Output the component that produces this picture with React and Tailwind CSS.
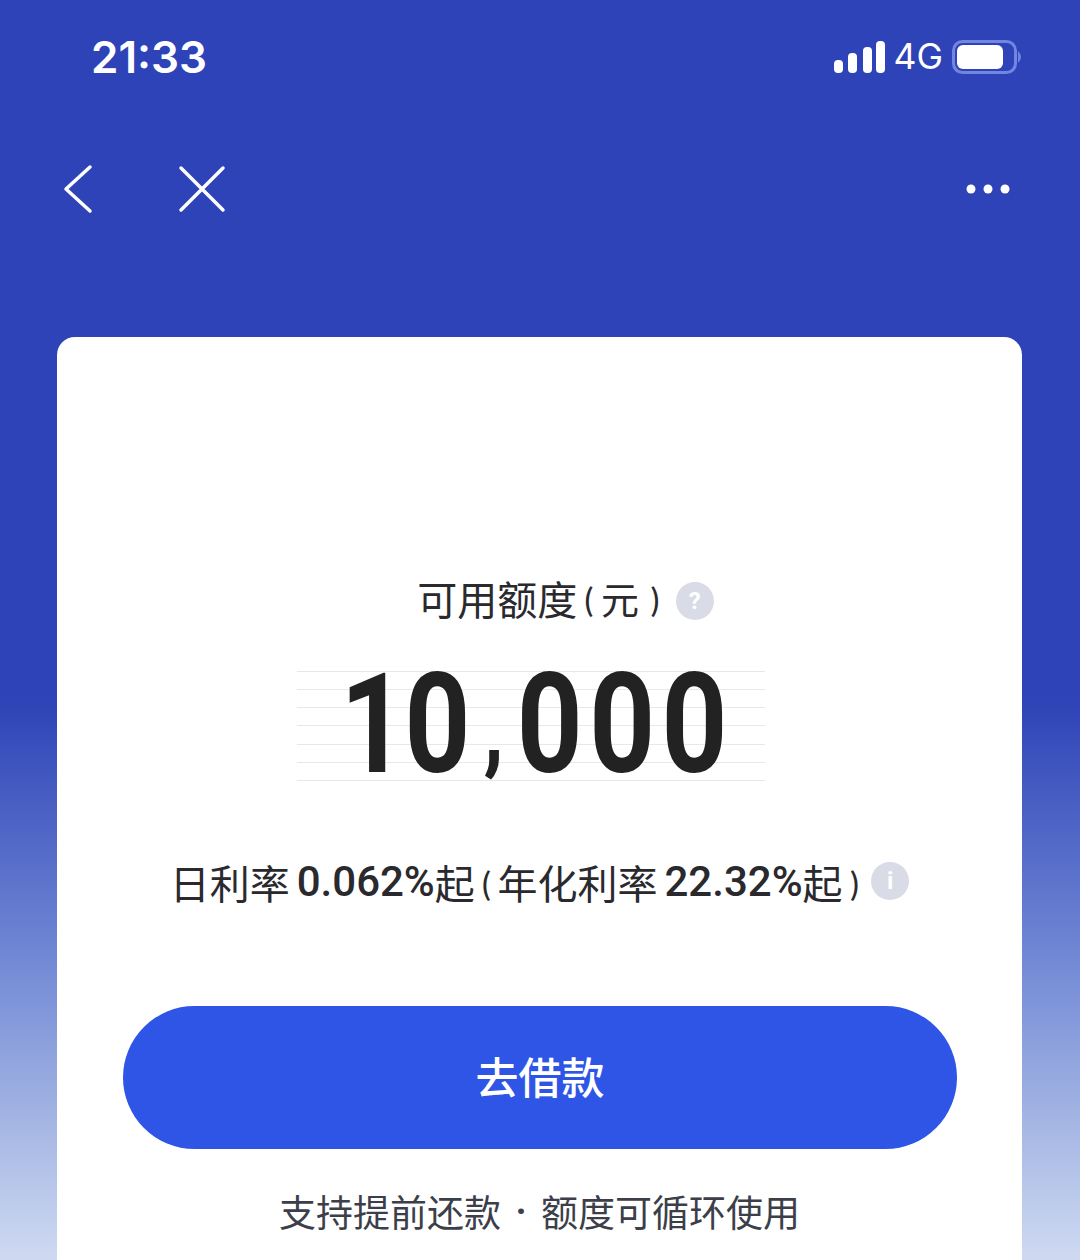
export default function App() {
  const cjk = { fontFamily: '"Noto Sans CJK SC", sans-serif' };
  return (
    <div className="relative h-[1260px] w-[1080px] overflow-hidden bg-[linear-gradient(180deg,#2d43b7_0px,#2d43b7_700px,#6f86d4_950px,#9fb1e2_1105px,#cfdaf1_1260px)] font-['Roboto',sans-serif]">
      <div className="flex h-[114px] items-center justify-between pl-[91px] pr-[57px]">
        <span className="text-[44px] font-semibold leading-none tracking-[0px] text-white font-['Inter',sans-serif]">21:33</span>
        <div className="flex items-center">
          <svg width="52" height="32" viewBox="0 0 52 32" fill="#fff" className="mr-[8px]">
            <rect x="0" y="19" width="9" height="13" rx="4" />
            <rect x="14" y="12" width="9" height="20" rx="4" />
            <rect x="29" y="6" width="9" height="26" rx="4" />
            <rect x="42" y="0" width="9" height="32" rx="4" />
          </svg>
          <span className="mr-[9px] text-[35.5px] leading-none text-white font-['Inter',sans-serif]">4G</span>
          <svg width="71" height="34" viewBox="0 0 71 34">
            <rect x="1.5" y="1.5" width="62" height="31" rx="9" fill="none" stroke="#7286e0" strokeWidth="3" />
            <rect x="5" y="5" width="46" height="24" rx="6" fill="#fff" />
            <path d="M66 11 Q72 17 66 23Z" fill="#7286e0" />
          </svg>
        </div>
      </div>
      <div className="flex h-[150px] items-center justify-between pl-[62px] pr-[68px]">
        <div className="flex items-center gap-[84px]">
          <svg width="32" height="50" viewBox="0 0 32 50" fill="none" stroke="#fff" strokeWidth="3.5" strokeLinecap="round" strokeLinejoin="round">
            <path d="M28 3 L4 25 L28 47" />
          </svg>
          <svg width="48" height="48" viewBox="0 0 48 48" fill="none" stroke="#fff" strokeWidth="3.5" strokeLinecap="round">
            <path d="M3 3 L45 45 M45 3 L3 45" />
          </svg>
        </div>
        <svg width="46" height="10" viewBox="0 0 46 10" fill="#fff">
          <circle cx="5" cy="5" r="4.5" /><circle cx="22" cy="5" r="4.5" /><circle cx="39" cy="5" r="4.5" />
        </svg>
      </div>
      <div className="ml-[57px] mt-[73px] h-[1000px] w-[965px] rounded-t-[18px] bg-white pt-[236px]" style={cjk}>
        <div className="flex h-[56px] items-center justify-center pl-[52px]">
          <div className="flex items-center pb-[6px] text-[#2a2a2e]">
            <span className="text-[40px] leading-none">可用额度</span>
            <span className="ml-[6px] text-[30px] font-medium leading-none">(</span>
            <span className="ml-[7px] text-[38px] leading-none">元</span>
            <span className="ml-[11px] text-[30px] font-medium leading-none">)</span>
          </div>
          <span className="ml-[15px] flex h-[38px] w-[38px] items-center justify-center rounded-full bg-[#d9dbe6] text-[24px] font-bold leading-none text-white font-['Roboto',sans-serif]">?</span>
        </div>
        <div className="relative ml-[240px] mt-[42px] flex h-[110px] w-[468px] items-center justify-center">
          <div className="absolute inset-0 flex flex-col justify-between">
            {[0,1,2,3,4,5,6].map((i) => (<div key={i} className="h-px w-full bg-[#e8e8e8]" />))}
          </div>
          <span className="relative ml-[12px] flex scale-x-[0.82] items-baseline pb-[4px] text-[140px] font-bold leading-none tracking-[8px] text-[#222222] font-['Roboto',sans-serif]">
            <span className="tracking-[-2px]">1</span>
            <span>0</span>
            <span className="mx-[8px] inline-block -translate-y-[10px] text-[100px] leading-none">,</span>
            <span>000</span>
          </span>
        </div>
        <div className="mt-[73px] flex h-[56px] items-center justify-center text-[40px] leading-none text-[#2a2a2e]">
          <div className="flex items-center">
            <span>日利率</span>
            <span className="ml-[7px] text-[42px] font-medium font-['Roboto',sans-serif]">0.062%</span>
            <span>起</span>
            <span className="ml-[6px] text-[30px] font-medium">(</span>
            <span className="ml-[6px]">年化利率</span>
            <span className="ml-[7px] text-[42px] font-medium font-['Roboto',sans-serif]">22.32%</span>
            <span>起</span>
            <span className="ml-[7px] text-[30px] font-medium">)</span>
          </div>
          <span className="ml-[11px] -mt-[3px] flex h-[38px] w-[38px] items-center justify-center rounded-full bg-[#d9dbe6] text-[24px] font-bold leading-none text-white font-['Roboto',sans-serif]">i</span>
        </div>
        <button className="ml-[66px] mt-[96px] flex h-[143px] w-[834px] items-center justify-center rounded-full bg-[#2e55e5] pb-[4px] text-[43px] font-medium leading-none text-white">去借款</button>
        <div className="mt-[35px] flex h-[56px] items-center justify-center pb-[2px] text-[37px] leading-none text-[#3c3f4a]">
          <span>支持提前还款</span>
          <span className="w-[40px] text-center font-bold font-['Roboto',sans-serif]">·</span>
          <span>额度可循环使用</span>
        </div>
      </div>
    </div>
  );
}
